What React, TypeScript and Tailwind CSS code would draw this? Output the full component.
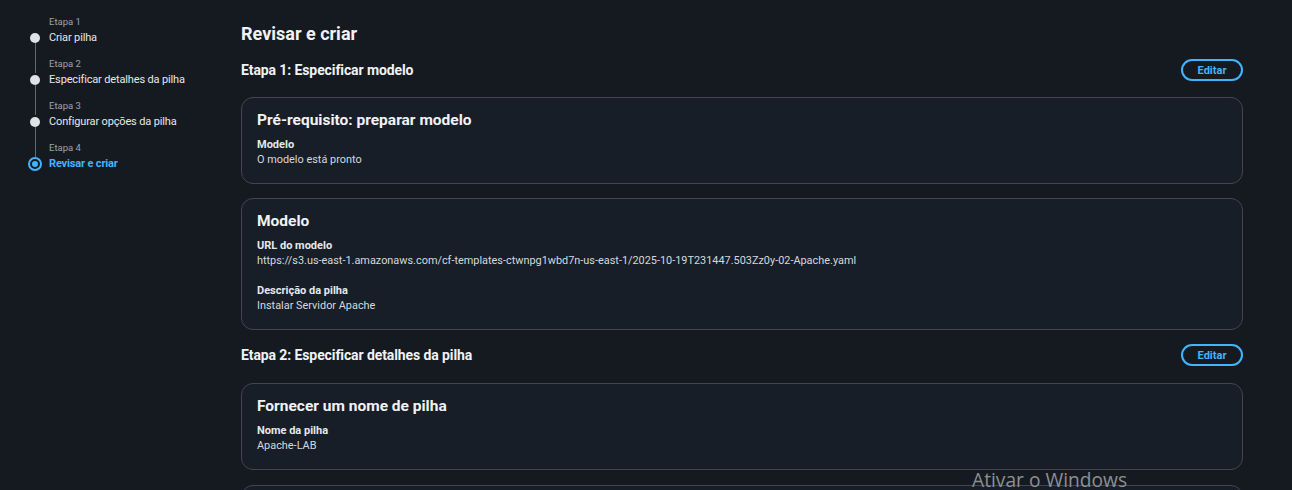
import React from "react";

const font = { fontFamily: "Roboto, 'Noto Sans', sans-serif" };

function Card({ title, children }: { title: string; children: React.ReactNode }) {
  return (
    <div className="rounded-[12px] border border-[#424650] bg-[#181e27] px-[15px] pt-[11px] pb-[16px]">
      <h3 className="text-[15.5px] font-bold text-[#f0f2f5] leading-[22px]">{title}</h3>
      <div className="mt-[6px] flex flex-col gap-[15px]">{children}</div>
    </div>
  );
}

function Field({ label, value }: { label: string; value: string }) {
  return (
    <div>
      <div className="text-[11px] font-bold text-[#e5e8ec] leading-[15px]">{label}</div>
      <div className="text-[10.9px] text-[#d5d9de] leading-[15px]">{value}</div>
    </div>
  );
}

function SectionHeader({ title }: { title: string }) {
  return (
    <div className="flex items-center justify-between h-[22px]">
      <h2 className="text-[14px] font-bold text-[#f0f2f5] tracking-[-0.1px]">{title}</h2>
      <button className="h-[22px] w-[62px] rounded-full border-2 border-[#42b4ff] text-[#42b4ff] text-[11px] font-bold leading-none">
        Editar
      </button>
    </div>
  );
}

export default function App() {
  const steps = [
    { n: 1, label: "Criar pilha" },
    { n: 2, label: "Especificar detalhes da pilha" },
    { n: 3, label: "Configurar opções da pilha" },
    { n: 4, label: "Revisar e criar", active: true },
  ];
  return (
    <div className="relative w-[1292px] h-[490px] overflow-hidden bg-[#151a21] flex" style={font}>
      <aside className="w-[241px] shrink-0 pl-[29px] pt-[15px]">
        <div className="flex flex-col">
          {steps.map((s, i) => (
            <div key={s.n} className="flex h-[42px]">
              <div className="relative w-[20px] shrink-0">
                {i > 0 && <div className="absolute left-[6px] top-[-14px] h-[30px] w-px bg-[#5f6b7a]" />}
                {s.active ? (
                  <div className="absolute z-10 left-[-1px] top-[16px] h-[14px] w-[14px] rounded-full border-2 border-[#42b4ff] flex items-center justify-center">
                    <div className="h-[6px] w-[6px] rounded-full bg-[#42b4ff]" />
                  </div>
                ) : (
                  <div className="absolute z-10 left-[1px] top-[18px] h-[10px] w-[10px] rounded-full bg-[#e0e2e6]" />
                )}
              </div>
              <div className="flex flex-col">
                <span className="text-[9.5px] leading-[13px] text-[#9aa3ae]">Etapa {s.n}</span>
                <span
                  className={
                    "text-[11px] leading-[19px] tracking-[-0.15px] " +
                    (s.active ? "font-bold text-[#42b4ff]" : "text-[#e5e8ec]")
                  }
                >
                  {s.label}
                </span>
              </div>
            </div>
          ))}
        </div>
      </aside>
      <main className="flex-1 pr-[49px] pt-[23px]">
        <h1 className="text-[18px] font-bold text-[#f0f2f5] leading-[22px]">Revisar e criar</h1>
        <div className="mt-[14px]">
          <SectionHeader title="Etapa 1: Especificar modelo" />
        </div>
        <div className="mt-[16px] flex flex-col gap-[14px]">
          <Card title="Pré-requisito: preparar modelo">
            <Field label="Modelo" value="O modelo está pronto" />
          </Card>
          <Card title="Modelo">
            <Field
              label="URL do modelo"
              value="https://s3.us-east-1.amazonaws.com/cf-templates-ctwnpg1wbd7n-us-east-1/2025-10-19T231447.503Zz0y-02-Apache.yaml"
            />
            <Field label="Descrição da pilha" value="Instalar Servidor Apache" />
          </Card>
        </div>
        <div className="mt-[14px]">
          <SectionHeader title="Etapa 2: Especificar detalhes da pilha" />
        </div>
        <div className="mt-[17px] flex flex-col gap-[15px]">
          <Card title="Fornecer um nome de pilha">
            <Field label="Nome da pilha" value="Apache-LAB" />
          </Card>
          <div className="h-[60px] rounded-[12px] border border-[#424650] bg-[#181e27]" />
        </div>
      </main>
      <div
        className="absolute left-[972px] top-[467px] text-[19.2px] leading-[26px] text-[#8c8f94] pointer-events-none"
        style={{ fontFamily: "'Open Sans', 'Noto Sans', sans-serif", fontWeight: 400 }}
      >
        Ativar o Windows
      </div>
    </div>
  );
}
